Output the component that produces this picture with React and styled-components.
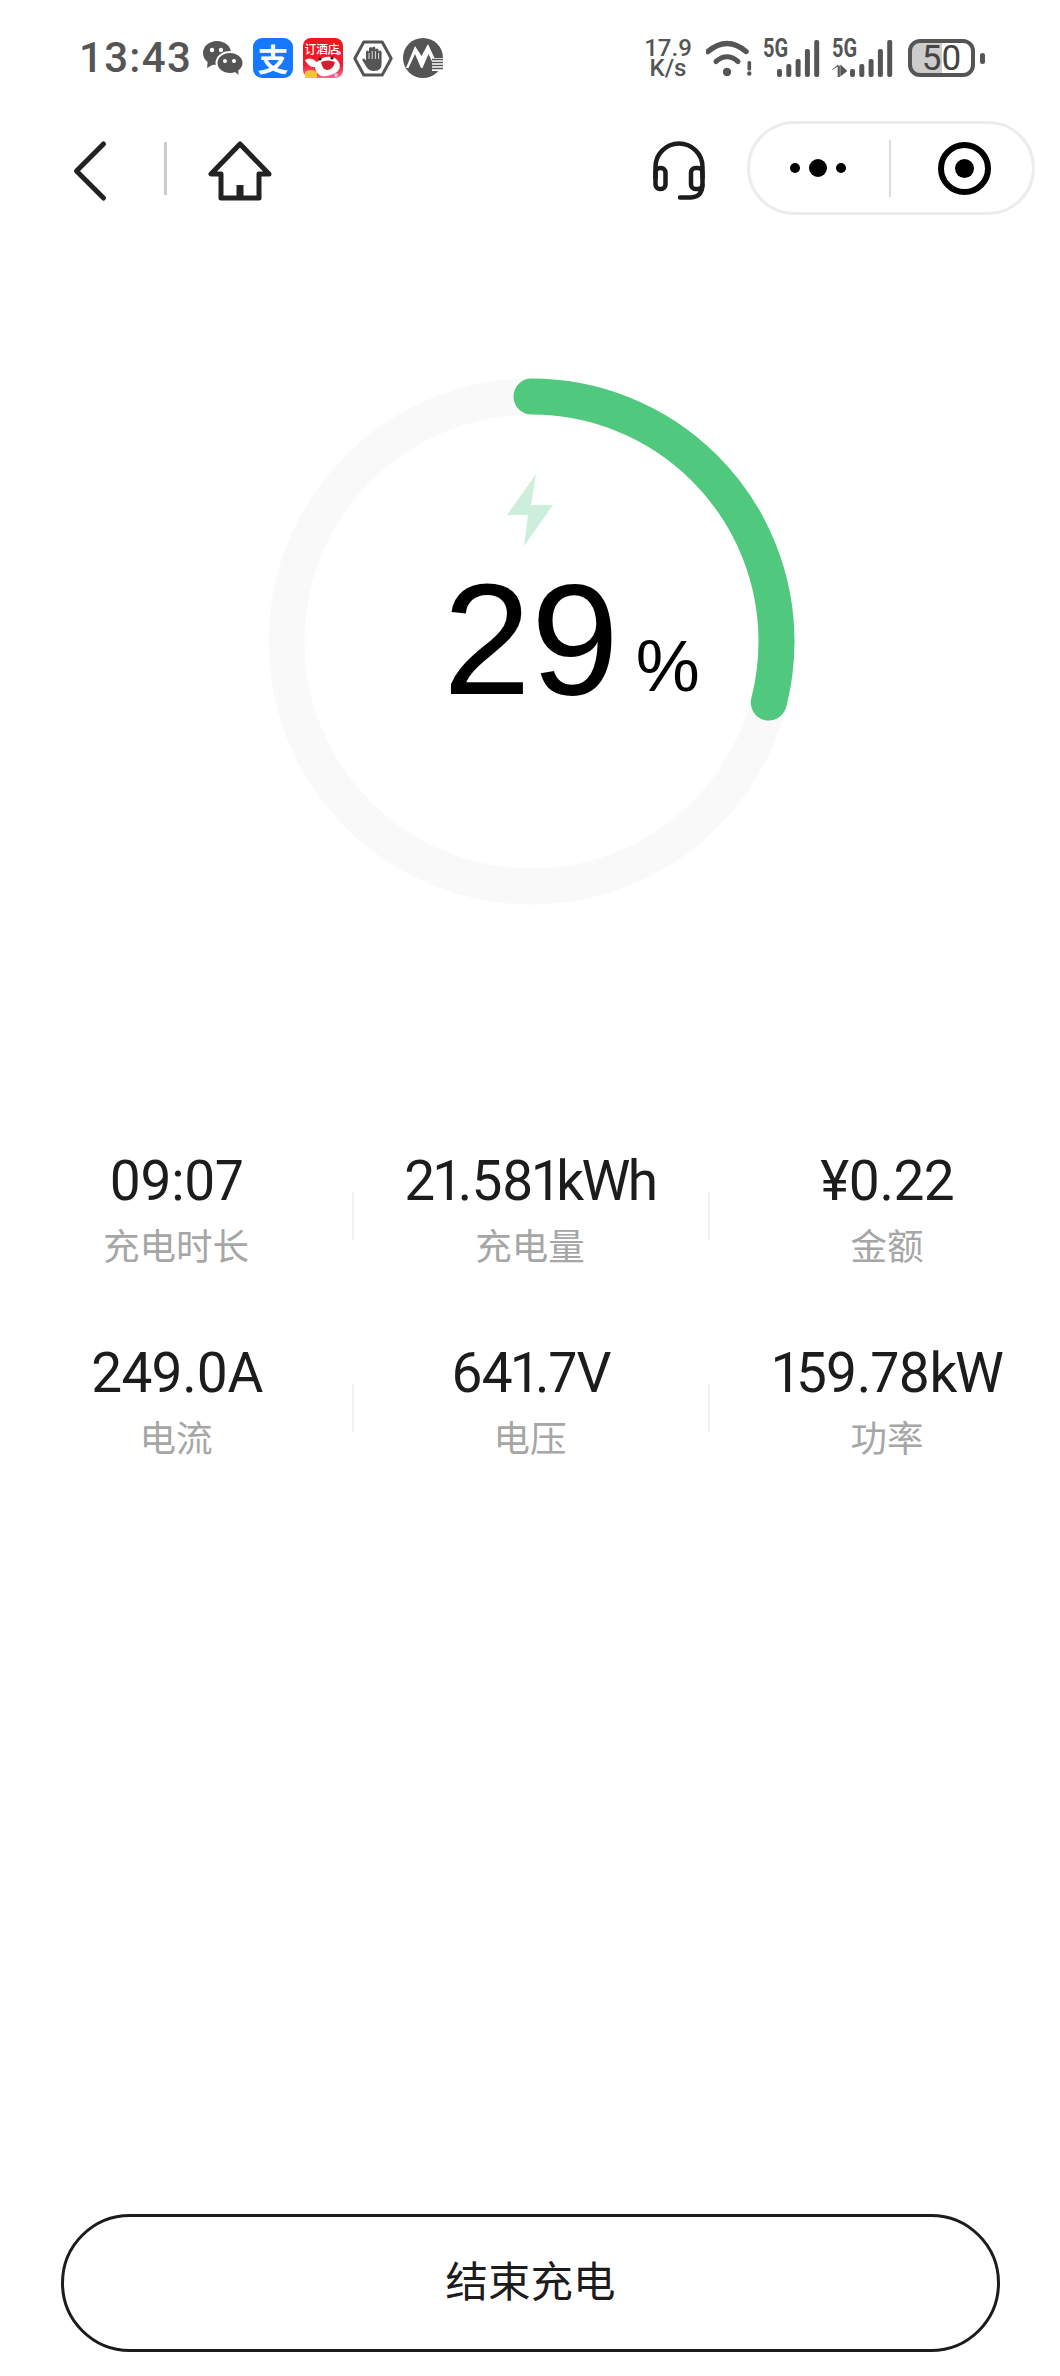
import React from "react";
import styled, { createGlobalStyle } from "styled-components";

const Global = createGlobalStyle`
  html, body { margin: 0; padding: 0; background: #fff; }
  * { box-sizing: border-box; }
`;

const Page = styled.div`
  width: 1060px;
  height: 2376px;
  overflow: hidden;
  display: flex;
  flex-direction: column;
  background: #fff;
  font-family: "Roboto", "Noto Sans CJK SC", sans-serif;
`;

const StatusBar = styled.div`
  height: 40px;
  margin-top: 38px;
  padding: 0 77px 0 79px;
  display: flex;
  align-items: center;
  justify-content: space-between;
  color: #555;
`;
const StatusGroup = styled.div`
  display: flex;
  align-items: center;
  gap: ${(p) => p.$gap}px;
`;
const Time = styled.div`
  font-size: 42px;
  font-weight: 500;
  letter-spacing: 1.3px;
  line-height: 40px;
  width: 111px;
  white-space: nowrap;
`;
const NotifyIcons = styled.div`
  display: flex;
  align-items: center;
  gap: 10px;
  svg { display: block; }
`;
const AlipayIcon = styled.div`
  width: 40px;
  height: 40px;
  border-radius: 9px;
  background: #1677ff;
  color: #fff;
  font: 700 31px/40px "Noto Sans CJK SC", sans-serif;
  text-align: center;
`;
const Speed = styled.div`
  width: 48px;
  display: flex;
  flex-direction: column;
  align-items: center;
  font-size: 24px;
  font-weight: 500;
  margin-right: 14px;
  span { display: block; height: 20px; line-height: 20px; }
`;
const SignalSlot = styled.div`
  position: relative;
  margin-right: ${(p) => p.$after}px;
  svg { display: block; }
`;
const NetLabel = styled.span`
  position: absolute;
  left: 0;
  top: 0;
  font-size: 25px;
  font-weight: 700;
  line-height: 20px;
  transform: scaleX(0.8);
  transform-origin: left center;
`;
const Battery = styled.div`
  position: relative;
  width: 67px;
  height: 38px;
  border: 4px solid #555;
  border-radius: 12px;
  background: linear-gradient(90deg, #ccc 0 50%, #fff 50% 100%);
  font-size: 35px;
  line-height: 31px;
  text-align: center;
  color: #444;
  margin-right: 8px;
  &::after {
    content: "";
    position: absolute;
    right: -14px;
    top: 10px;
    width: 5px;
    height: 11px;
    border-radius: 3px;
    background: #555;
  }
`;

const NavBar = styled.div`
  height: 94px;
  margin-top: 43px;
  padding: 0 25px 0 70px;
  display: flex;
  align-items: center;
  svg { display: block; margin-top: 6px; }
`;
const NavDivider = styled.div`
  width: 3px;
  height: 53px;
  margin: 0 40px 0 54px;
  background: #ccc;
`;
const Spacer = styled.div`
  flex: 1;
`;
const Capsule = styled.div`
  width: 288px;
  height: 94px;
  margin-left: 42px;
  border: 3px solid #ececec;
  border-radius: 47px;
  display: flex;
  align-items: center;
`;
const CapsuleCell = styled.div`
  flex: 1;
  display: flex;
  align-items: center;
  justify-content: center;
  padding: ${(p) => p.$pad};
`;
const CapsuleLine = styled.div`
  width: 2px;
  height: 57px;
  background: #ddd;
`;
const Dots = styled.div`
  display: flex;
  align-items: center;
  gap: 9px;
`;
const Dot = styled.span`
  width: ${(p) => p.$size}px;
  height: ${(p) => p.$size}px;
  border-radius: 50%;
  background: #000;
`;
const Target = styled.div`
  width: 53px;
  height: 53px;
  border: 6px solid #000;
  border-radius: 50%;
  display: flex;
  align-items: center;
  justify-content: center;
  &::after {
    content: "";
    width: 19px;
    height: 19px;
    border-radius: 50%;
    background: #000;
  }
`;

const RingWrap = styled.div`
  width: 527px;
  height: 527px;
  margin: 163px 0 0 268px;
  display: grid;
  > * { grid-area: 1 / 1; }
  svg { display: block; }
`;
const RingCenter = styled.div`
  display: flex;
  flex-direction: column;
  align-items: center;
  padding-top: 96px;
`;
const BoltSlot = styled.div`
  margin-right: 3px;
`;
const NumberRow = styled.div`
  display: flex;
  align-items: baseline;
  margin: 13px 0 0 80px;
  color: #000;
  font-family: "Liberation Sans", sans-serif;
`;
const Number = styled.span`
  font-size: 158px;
  line-height: 160px;
`;
const Unit = styled.span`
  font-size: 72px;
  line-height: 76px;
  margin-left: 17px;
  transform: translateY(-3px);
`;

const Stats = styled.div`
  margin-top: 244px;
  width: 1066px;
  display: grid;
  grid-template-columns: 352px 356px 358px;
  row-gap: 58px;
`;
const Stat = styled.div`
  position: relative;
  height: 134px;
  display: flex;
  flex-direction: column;
  align-items: center;
  &::before {
    content: "";
    display: ${(p) => (p.$first ? "none" : "block")};
    position: absolute;
    left: 0;
    top: 43px;
    width: 2px;
    height: 48px;
    background: #f1f1f1;
  }
`;
const Value = styled.div`
  font-size: 55px;
  line-height: 64px;
  color: #1c1c1c;
  white-space: nowrap;
  letter-spacing: -0.7px;
  font-variant-numeric: proportional-nums;
`;
const ValueUnit = styled.span`
  letter-spacing: -2.5px;
`;
const Label = styled.div`
  margin-top: 8px;
  font: 400 36.5px/48px "Noto Sans CJK SC", sans-serif;
  color: #a6a6a6;
  white-space: nowrap;
`;

const EndButton = styled.button`
  margin: auto 0 24px 61px;
  width: 939px;
  height: 138px;
  background: #fff;
  border: 3px solid #1c1c1c;
  border-radius: 69px;
  color: #1c1c1c;
  font: 400 42.5px/48px "Noto Sans CJK SC", sans-serif;
  padding: 0 0 8px;
`;

const C = "#555";

const Wechat = () => (
  <svg width="40" height="34" viewBox="0 0 40 34">
    <ellipse cx="14" cy="12" rx="14" ry="12" fill={C} />
    <path d="M5 18 L4 27 L13 22 Z" fill={C} />
    <circle cx="9" cy="9" r="2.2" fill="#fff" />
    <circle cx="18" cy="9" r="2.2" fill="#fff" />
    <ellipse cx="27" cy="22" rx="13.5" ry="11" fill={C} stroke="#fff" strokeWidth="2" />
    <path d="M31 30 L35.5 34 L35 27 Z" fill={C} />
    <circle cx="22" cy="20" r="2" fill="#fff" />
    <circle cx="31" cy="20" r="2" fill="#fff" />
  </svg>
);

const Hotel = () => (
  <svg width="40" height="40" viewBox="0 0 40 40">
    <defs>
      <linearGradient id="hotelBg" x1="0" y1="0" x2="0" y2="1">
        <stop offset="0" stopColor="#f0161c" />
        <stop offset="0.65" stopColor="#ee1c30" />
        <stop offset="1" stopColor="#f56a8a" />
      </linearGradient>
    </defs>
    <rect width="40" height="40" rx="8" fill="url(#hotelBg)" />
    <text x="19" y="16" textAnchor="middle" fontSize="12" fontWeight="500" fill="#fff" fontFamily="Noto Sans CJK SC, sans-serif" textLength="35" lengthAdjust="spacingAndGlyphs">订酒店</text>
    <path d="M2 22 Q8 18 14 24 Q22 16 32 20 Q40 26 35 33 Q28 39 18 38 Q12 34 12 29 Q6 30 2 22 Z" fill="#fff" />
    <path d="M18 24 Q25 21 32 24 Q30 32 24 32 Q19 31 18 24 Z" fill="#d3202f" />
    <circle cx="17" cy="21" r="1.6" fill="#222" />
    <circle cx="29" cy="20" r="1.6" fill="#222" />
    <path d="M2 40 V34 Q8 30 14 34 V40 Z" fill="#f6c13c" />
    <circle cx="36" cy="15" r="2" fill="#d8c8f0" />
    <circle cx="33" cy="37" r="2" fill="#d8b8f0" />
  </svg>
);

const Hand = () => (
  <svg width="40" height="37" viewBox="0 0 40 37">
    <path d="M1.8 18.5 L10.8 2 H29.2 L38.2 18.5 L29.2 35 H10.8 Z" fill="none" stroke={C} strokeWidth="3" strokeLinejoin="round" />
    <path d="M13 12 a1.5 1.5 0 0 1 3 0 V8.5 a1.5 1.5 0 0 1 3.2 0 V8 a1.5 1.5 0 0 1 3.2 0 V10 a1.5 1.5 0 0 1 3.2 0 V12 a1.5 1.5 0 0 1 3 0 V23 Q29 31 21 31 Q16 31 13.5 27 L9.5 20.5 Q9 18 11 18.5 L13 20.5 Z" fill={C} />
    <path d="M16 13 V19 M19.2 11 V19 M22.4 11 V19 M25.6 13 V19" stroke="#fff" strokeWidth="0.8" />
  </svg>
);

const Cmb = () => (
  <svg width="40" height="40" viewBox="0 0 40 40">
    <circle cx="20" cy="20" r="20" fill={C} />
    <path d="M3 30 L12 8 L18.5 18 L25 6 L36 30 Z" fill="#fff" />
    <path d="M5.5 30 L12 16 L18 30 Z M19.5 30 L25.5 16 L32 30 Z" fill={C} />
    <path d="M29 20 H40 V33 H29 Z" fill="#fff" />
    <path d="M29 21.5 H40 M29 24.5 H40 M29 27.5 H40 M29 30.5 H40" stroke={C} strokeWidth="1.5" />
  </svg>
);

const Wifi = () => (
  <svg width="48" height="38" viewBox="0 0 48 38">
    <path d="M2 12.5 Q21 -3.5 40 12.5" fill="none" stroke={C} strokeWidth="5.5" strokeLinecap="round" />
    <path d="M10 22.5 Q21 13 32 22.5" fill="none" stroke={C} strokeWidth="5" strokeLinecap="round" />
    <circle cx="21" cy="33" r="4.2" fill={C} />
    <rect x="41.5" y="22" width="3.6" height="9.5" rx="1.5" fill={C} />
    <circle cx="43.3" cy="34.5" r="2.2" fill={C} />
  </svg>
);

const barTops = [30, 25, 20, 10, 1];

const Net = ({ arrows, after }) => (
  <SignalSlot $after={after}>
    <NetLabel>5G</NetLabel>
    <svg width={arrows ? 61 : 57} height="38" viewBox={`0 0 ${arrows ? 61 : 57} 38`}>
      {barTops.map((t, i) => (
        <rect key={i} x={(arrows ? 18 : 14) + i * 9.3} y={t} width="5" height={38 - t} rx="2" fill={C} />
      ))}
      {arrows && (
        <path d="M0 31 L6 26 V38 H7.6 V26.5 M8.6 26 V37 L15 32 Z" fill={C} stroke={C} strokeWidth="0.6" />
      )}
    </svg>
  </SignalSlot>
);

const Back = () => (
  <svg width="40" height="62" viewBox="0 0 40 62">
    <path d="M33.5 4 L6.5 31 L33.5 58" fill="none" stroke="#222" strokeWidth="5" strokeLinecap="round" strokeLinejoin="round" />
  </svg>
);

const Home = () => (
  <svg width="66" height="60" viewBox="0 0 66 60">
    <path d="M33 3 L4 33 H14 V57 H52 V33 H62 Z" fill="none" stroke="#222" strokeWidth="5" strokeLinejoin="round" />
    <rect x="29.5" y="44" width="7" height="13" fill="#222" />
  </svg>
);

const Headset = () => (
  <svg width="52" height="60" viewBox="0 0 52 60">
    <path d="M2.5 38 V26 a23.5 23.5 0 0 1 47 0 V38" fill="none" stroke="#1c1c1c" strokeWidth="4.5" />
    <rect x="2.5" y="27" width="10" height="21" rx="4.5" fill="none" stroke="#1c1c1c" strokeWidth="4.5" />
    <rect x="38" y="27" width="11.5" height="21" rx="4.5" fill="none" stroke="#1c1c1c" strokeWidth="4.5" />
    <path d="M49.5 44 Q49 56 38 56.5 H27" fill="none" stroke="#1c1c1c" strokeWidth="4.5" strokeLinecap="round" />
  </svg>
);

const Ring = ({ percent }) => {
  const r = 245;
  const c = 2 * Math.PI * r;
  return (
    <svg width="527" height="527" viewBox="0 0 527 527">
      <circle cx="263.5" cy="263.5" r={r} fill="none" stroke="#f9f9f9" strokeWidth="36" />
      <circle
        cx="263.5"
        cy="263.5"
        r={r}
        fill="none"
        stroke="#50c97f"
        strokeWidth="36"
        strokeLinecap="round"
        strokeDasharray={`${c * percent} ${c}`}
        transform="rotate(-90 263.5 263.5)"
      />
    </svg>
  );
};

const Bolt = () => (
  <svg width="46" height="72" viewBox="0 0 46 72">
    <path d="M29 0 L0 41 H21 L17 72 L46 31 H24 Z" fill="#ceeedd" />
  </svg>
);

const stats = [
  ["09:07", "", "充电时长"],
  ["21.581", "kWh", "充电量"],
  ["¥0.22", "", "金额"],
  ["249.0", "A", "电流"],
  ["641.7", "V", "电压"],
  ["159.78", "kW", "功率"],
];

export default function App() {
  return (
    <Page>
      <Global />
      <StatusBar>
        <StatusGroup $gap={13}>
          <Time>13:43</Time>
          <NotifyIcons>
            <Wechat />
            <AlipayIcon>支</AlipayIcon>
            <Hotel />
            <Hand />
            <Cmb />
          </NotifyIcons>
        </StatusGroup>
        <StatusGroup $gap={0}>
          <Speed>
            <span>17.9</span>
            <span>K/s</span>
          </Speed>
          <SignalSlot $after={9}>
            <Wifi />
          </SignalSlot>
          <Net after={12} />
          <Net arrows after={15} />
          <Battery>50</Battery>
        </StatusGroup>
      </StatusBar>

      <NavBar>
        <Back />
        <NavDivider />
        <Home />
        <Spacer />
        <Headset />
        <Capsule>
          <CapsuleCell $pad="0 4px 0 0">
            <Dots>
              <Dot $size={10} />
              <Dot $size={18} />
              <Dot $size={10} />
            </Dots>
          </CapsuleCell>
          <CapsuleLine />
          <CapsuleCell $pad="0 0 0 6px">
            <Target />
          </CapsuleCell>
        </Capsule>
      </NavBar>

      <RingWrap>
        <Ring percent={0.29} />
        <RingCenter>
          <BoltSlot>
            <Bolt />
          </BoltSlot>
          <NumberRow>
            <Number>29</Number>
            <Unit>%</Unit>
          </NumberRow>
        </RingCenter>
      </RingWrap>

      <Stats>
        {stats.map(([v, u, l], i) => (
          <Stat key={l} $first={i % 3 === 0}>
            <Value>
              {v}
              {u && <ValueUnit>{u}</ValueUnit>}
            </Value>
            <Label>{l}</Label>
          </Stat>
        ))}
      </Stats>

      <EndButton>结束充电</EndButton>
    </Page>
  );
}
